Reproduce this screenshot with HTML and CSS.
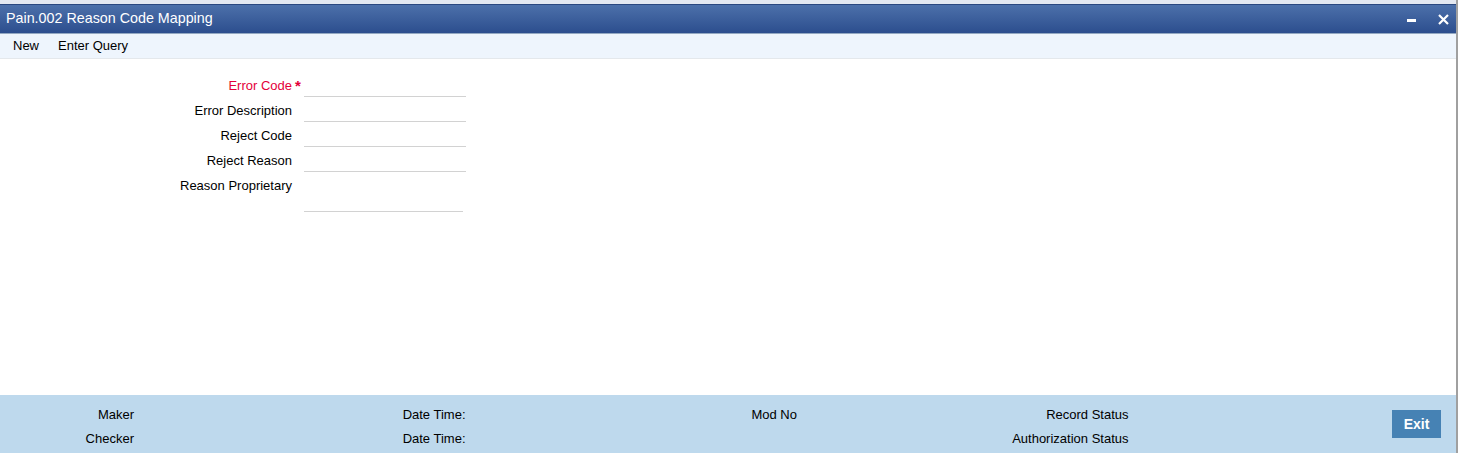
FILE: index.html
```html
<!DOCTYPE html>
<html lang="en">
<head>
<meta charset="UTF-8">
<meta name="viewport" content="width=device-width, initial-scale=1.0">
<title>Pain.002 Reason Code Mapping</title>

<!-- CSS Styling -->
<link rel="stylesheet" href="styles.css">
</head>
<body class="screen">

<div class="frame">
    <div class="topstrip"></div>

    <!-- Window title -->
    <div class="titlebar">
        <h1>Pain.002 Reason Code Mapping</h1>
        <div class="winbtns">
            <span class="btn-min" title="Minimize"></span>
            <svg class="btn-close" width="11" height="11" viewBox="0 0 11 11">
                <path d="M1 1 L10 10 M10 1 L1 10" stroke="#fff" stroke-width="2.2" fill="none"/>
            </svg>
        </div>
    </div>

    <!-- Toolbar -->
    <div class="toolbar">
        <a href="#">New</a>
        <a href="#">Enter Query</a>
    </div>

    <!-- Form -->
    <div class="content">
        <div class="form">
            <label class="req">Error Code</label>
            <span class="star">*</span>
            <input type="text">

            <label>Error Description</label>
            <span></span>
            <input type="text">

            <label>Reject Code</label>
            <span></span>
            <input type="text">

            <label>Reject Reason</label>
            <span></span>
            <input type="text">

            <label>Reason Proprietary</label>
            <span></span>
            <textarea></textarea>
        </div>
    </div>

    <!-- Audit footer -->
    <div class="footer">
        <div class="audit">
            <span class="lbl">Maker</span><span></span>
            <span class="lbl">Date Time:</span><span></span>
            <span class="lbl">Mod No</span><span></span>
            <span class="lbl">Record Status</span><span></span>

            <span class="lbl">Checker</span><span></span>
            <span class="lbl">Date Time:</span><span></span>
            <span></span><span></span>
            <span class="lbl">Authorization Status</span><span></span>
        </div>
        <button class="exit">Exit</button>
    </div>
</div>

</body>
</html>
```

FILE: styles.css
```css
html, body {
    margin: 0;
    padding: 0;
    height: 100%;
}

.screen {
    font-family: "Liberation Sans", Arial, sans-serif;
    font-size: 13px;
    color: #000;
    background: #fff;
}

.frame {
    width: 1456px;
    height: 453px;
    border-right: 2px solid #a0a0a0;
    display: flex;
    flex-direction: column;
    box-sizing: content-box;
}

.topstrip {
    height: 4px;
    background: #e3e8f1;
}

.titlebar {
    height: 28px;
    border-top: 1px solid #2a4880;
    border-bottom: 1px solid #93a8c2;
    background: linear-gradient(#4c70aa, #2c4e8e);
    display: flex;
    align-items: center;
    justify-content: space-between;
    padding-left: 6px;
}

.titlebar h1 {
    margin: 0 0 2px 0;
    font-size: 14.3px;
    font-weight: normal;
    color: #fff;
}

.winbtns {
    display: flex;
    align-items: center;
    gap: 22px;
    padding-right: 7px;
}

.btn-min {
    display: block;
    width: 9px;
    height: 3px;
    background: #fff;
    margin-top: 2px;
}

.btn-close {
    display: block;
}

.toolbar {
    height: 25px;
    background: #eef5fd;
    border-bottom: 1px solid #e4e8ec;
    display: flex;
    align-items: center;
    padding-left: 13px;
    padding-bottom: 2px;
    box-sizing: border-box;
    gap: 19px;
}

.toolbar a {
    color: #000;
    text-decoration: none;
}

.content {
    flex: 1;
    padding-top: 16px;
}

.form {
    display: grid;
    grid-template-columns: 292px 12px 162px;
    grid-auto-rows: 25px;
}

.form label {
    text-align: right;
    line-height: 22px;
    color: #000;
}

.form label.req {
    color: #e4003a;
}

.form .star {
    color: #e4003a;
    font-size: 15px;
    font-weight: bold;
    line-height: 22px;
    padding-left: 3px;
}

.form input,
.form textarea {
    border: none;
    border-bottom: 1px solid #d2d2d2;
    height: 21px;
    padding: 0;
    margin: 0;
    font: inherit;
    outline: none;
    background: transparent;
}

.form textarea {
    width: 159px;
    height: 36px;
    resize: none;
    grid-row: span 2;
}

.footer {
    height: 58px;
    background: #bed9ed;
    display: flex;
    align-items: center;
}

.audit {
    display: grid;
    grid-template-columns: repeat(4, 134px 197.5px);
    grid-auto-rows: 24px;
    line-height: 24px;
    width: 1330px;
    padding-top: 6px;
}

.audit .lbl {
    text-align: right;
}

.exit {
    margin-left: 62px;
    width: 49px;
    height: 28px;
    border: none;
    background: #4682b4;
    color: #fff;
    font-family: inherit;
    font-size: 14px;
    font-weight: bold;
    padding: 0;
}
```
